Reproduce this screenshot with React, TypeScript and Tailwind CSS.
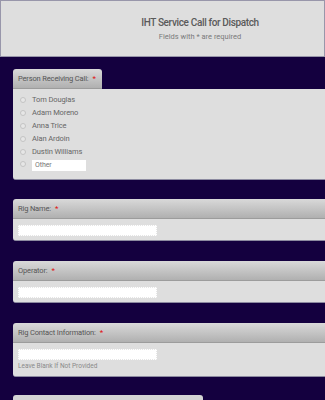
import React from 'react';

const people = ['Tom Douglas', 'Adam Moreno', 'Anna Trice', 'Alan Ardoin', 'Dustin Williams'];

const headerBg = 'bg-[linear-gradient(#d9d9d9,#b0b0b0)]';

const Req = () => <span className="text-[#e01010] ml-[4px] text-[8px] leading-none">*</span>;

const Label: React.FC<{ text: string; full?: boolean }> = ({ text, full }) => (
  <div
    className={`${headerBg} h-[20px] flex items-center whitespace-nowrap pl-[5px] pr-[6px] text-[7.5px] tracking-[-0.15px] text-[#555] rounded-t-[3px] border-b border-[#9c9c9c] ${
      full ? 'w-full' : 'self-start'
    }`}
  >
    {text}
    <Req />
  </div>
);

const TextField: React.FC<{ label: string; help?: string }> = ({ label, help }) => (
  <div className="ml-[13px] w-[330px] flex flex-col shrink-0">
    <Label text={label} full />
    <div className="bg-[#dedede] rounded-b-[3px] border-b border-[#8c8aa0] px-[5px] pt-[6px] pb-[4px]">
      <div className="w-[139px] h-[11px] bg-white border border-dotted border-[#e6e6e6]" />
      {help && <div className="text-[6.5px] text-[#8a8a8a] mt-[3px] mb-[2px] leading-none">{help}</div>}
    </div>
  </div>
);

export default function App() {
  return (
    <div
      className="w-[325px] h-[400px] overflow-hidden bg-[#14003f] flex flex-col"
      style={{ fontFamily: 'Roboto, "Liberation Sans", sans-serif' }}
    >
      <div className="h-[57px] shrink-0 bg-[#dedede] border border-[#9896aa] flex flex-col items-center justify-center pl-[75px] pt-[1px]">
        <div className="text-[10px] font-medium text-[#5a5a5a] tracking-[-0.35px] leading-none">IHT Service Call for Dispatch</div>
        <div className="text-[7.5px] text-[#7a7a7a] mt-[5px] leading-none">Fields with * are required</div>
      </div>

      <div className="ml-[13px] mt-[12px] w-[330px] flex flex-col shrink-0">
        <Label text="Person Receiving Call:" />
        <div className="bg-[#dedede] rounded-b-[3px] rounded-tr-[3px] border-b border-[#8c8aa0] pl-[7px] pt-[6px] pb-[8px] flex flex-col gap-[4px] text-[7.5px] tracking-[-0.1px] text-[#666]">
          {people.map(p => (
            <div key={p} className="flex items-center h-[9px]">
              <span className="w-[6px] h-[6px] rounded-full border border-[#c4c4c4] bg-[#e6e6e6]" />
              <span className="ml-[6px]">{p}</span>
            </div>
          ))}
          <div className="flex items-center">
            <span className="w-[6px] h-[6px] rounded-full border border-[#c4c4c4] bg-[#e6e6e6] -mt-[3px]" />
            <div className="ml-[6px] w-[54px] h-[11px] bg-white flex items-center pl-[3px] text-[7px] text-[#777]">Other</div>
          </div>
        </div>
      </div>

      <div className="mt-[19px] shrink-0">
        <TextField label="Rig Name:" />
      </div>
      <div className="mt-[20px] shrink-0">
        <TextField label="Operator:" />
      </div>
      <div className="mt-[20px] shrink-0">
        <TextField label="Rig Contact Information:" help="Leave Blank If Not Provided" />
      </div>
      <div className="ml-[13px] mt-[18px] w-[190px] h-[20px] shrink-0 rounded-t-[3px] bg-[#d4d4d4]" />
    </div>
  );
}
